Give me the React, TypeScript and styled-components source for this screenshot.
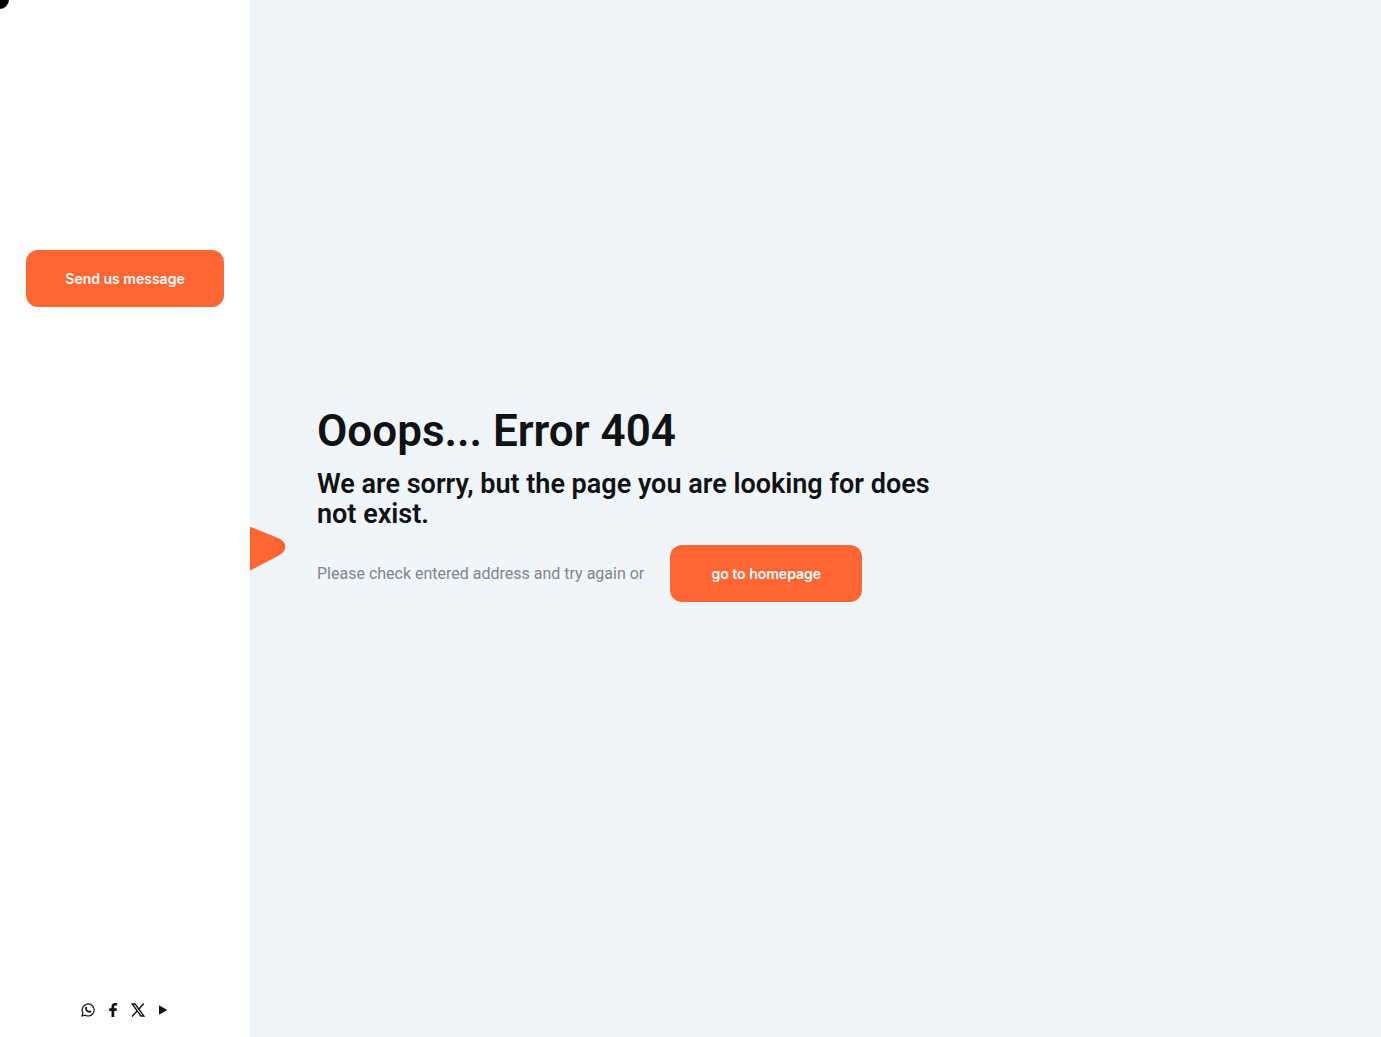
import React from "react";
import styled, { createGlobalStyle } from "styled-components";

const GlobalStyle = createGlobalStyle`
  *, *::before, *::after { box-sizing: border-box; }
  body {
    margin: 0;
    background: #f0f5f9;
    color: #101213;
    font-family: Roboto, "Liberation Sans", sans-serif;
    font-size: 16px;
  }
`;

const Page = styled.div`
  position: relative;
  display: flex;
  min-height: 100vh;
  overflow: hidden;
`;

const CursorDot = styled.span`
  position: absolute;
  top: -10px;
  left: -10px;
  width: 19px;
  height: 19px;
  border-radius: 50%;
  background: #000;
`;

const Sidebar = styled.aside`
  display: flex;
  flex: 0 0 250px;
  flex-direction: column;
  align-items: center;
  justify-content: space-between;
  padding: 250px 24px 20px;
  background: #fff;
`;

const ActionLink = styled.a<{ $width: number }>`
  display: inline-flex;
  align-items: center;
  justify-content: center;
  flex: none;
  width: ${({ $width }) => $width}px;
  height: 57px;
  border-radius: 12px;
  background: #ff6633;
  color: #fff;
  font-family: Inter, "Liberation Sans", sans-serif;
  font-size: 14px;
  font-weight: 600;
  line-height: 20px;
  text-decoration: none;
  white-space: nowrap;
`;

const SocialList = styled.ul`
  display: flex;
  gap: 11px;
  margin: 0;
  padding: 0;
  list-style: none;
`;

const SocialLink = styled.a`
  display: flex;
  color: #101213;

  svg {
    display: block;
    width: 14px;
    height: 14px;
  }
`;

const Content = styled.main`
  position: relative;
  display: flex;
  flex: 1;
  min-width: 0;
  align-items: center;
  padding: 0 67px 32px;
`;

const Accent = styled.svg`
  position: absolute;
  top: 526px;
  left: 0;
  width: 36px;
  height: 46px;
`;

const Message = styled.section`
  max-width: 620px;
`;

const Title = styled.h1`
  margin: 0 0 10px;
  font-size: 44px;
  font-weight: 600;
  line-height: 56px;
`;

const Subtitle = styled.h2`
  margin: 0 0 16px;
  font-size: 27px;
  font-weight: 600;
  line-height: 30px;
`;

const HintRow = styled.div`
  display: flex;
  align-items: center;
  gap: 26px;
`;

const Hint = styled.p`
  margin: 0;
  color: #80868b;
  font-size: 16px;
  line-height: 24px;
`;

const socials = [
  {
    name: "WhatsApp",
    drawing: (
      <>
        <path d="M1 13l.9-3.1A6 6 0 1 1 4.200 12.200z" fill="none" stroke="currentColor" strokeWidth="1.200" />
        <path d="M4.800 3.700c.4-.3.700-.2.900.2l.5 1.100c.1.300-.5.700-.4 1 .5 1 1.200 1.700 2.200 2.100.3.100.7-.8 1-.7l1.200.6c.4.200.1 1-.2 1.300-.8.800-2.200.6-3.700-.3C4.600 7.900 3.300 5.200 4.800 3.700z" fill="currentColor" />
      </>
    ),
  },
  {
    name: "Facebook",
    drawing: <path d="M5.500 14V7.900H3.200V5.300h2.300V3.700C5.500 1.300 6.900.1 9 .1c1 0 1.900.1 2.100.1v2.300H9.600c-1.100 0-1.400.5-1.400 1.300v1.500h2.700l-.4 2.600H8.200V14z" fill="currentColor" />,
  },
  {
    name: "X",
    drawing: (
      <>
        <path d="M1.200 1h2.900l8.700 12H9.900z" fill="none" stroke="currentColor" strokeWidth="1.300" />
        <path d="M12.700.5L7.800 6.200M6.100 8.100L1 13.600" fill="none" stroke="currentColor" strokeWidth="1.400" />
      </>
    ),
  },
  {
    name: "YouTube",
    drawing: <path d="M3 2.300l8.300 4.700L3 11.700z" fill="currentColor" />,
  },
];

export default function App() {
  return (
    <>
      <GlobalStyle />
      <Page>
        <Sidebar>
          <ActionLink href="#contact" $width={198}>Send us message</ActionLink>
          <SocialList>
            {socials.map(({ name, drawing }) => (
              <li key={name}>
                <SocialLink href={`#${name.toLowerCase()}`} aria-label={name}>
                  <svg viewBox="0 0 14 14" aria-hidden="true">{drawing}</svg>
                </SocialLink>
              </li>
            ))}
          </SocialList>
        </Sidebar>
        <Content>
          <Accent viewBox="0 0 36 46" aria-hidden="true">
            <path d="M0 .7L28 12C33 14 35.300 17 35.300 20.500C35.300 24.500 33 27 29 29.500L0 44.500z" fill="#ff6633" />
          </Accent>
          <Message>
            <Title>Ooops... Error 404</Title>
            <Subtitle>We are sorry, but the page you are looking for does not exist.</Subtitle>
            <HintRow>
              <Hint>Please check entered address and try again or</Hint>
              <ActionLink href="#home" $width={192}>go to homepage</ActionLink>
            </HintRow>
          </Message>
        </Content>
        <CursorDot />
      </Page>
    </>
  );
}
